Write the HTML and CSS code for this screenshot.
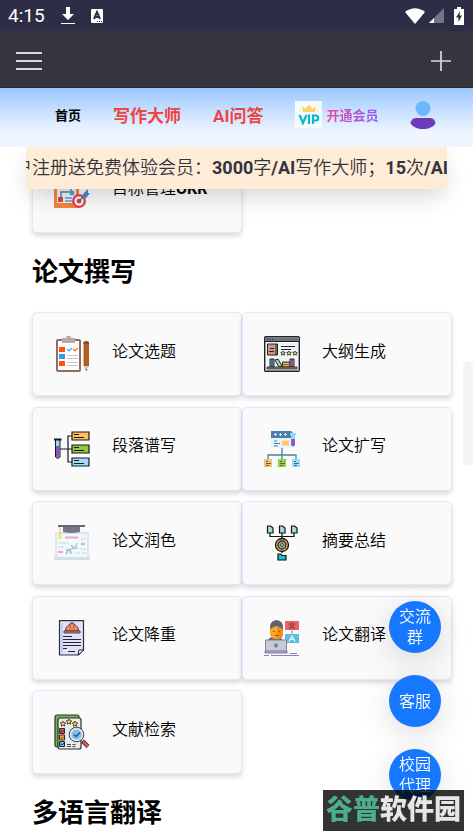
FILE: index.html
```html
<!DOCTYPE html>
<html lang="zh-CN">
<head>
<meta charset="utf-8">
<meta name="viewport" content="width=device-width, initial-scale=1">
<title>写作大师</title>
<link rel="stylesheet" href="styles.css">
</head>
<body>
<div class="status">
  <span class="time">4:15</span>
  <svg class="st-download" width="14" height="18" viewBox="0 0 14 18"><path fill="#fff" d="M5 0h4v7h4L7 13 1 7h4zM0 16h14v1H0z"/></svg>
  <svg class="st-keyboard" width="12" height="14" viewBox="0 0 12 14"><rect width="12" height="14" rx="1" fill="#fff"/><path d="M3 10 6 3l3 7M4 8h4" fill="none" stroke="#2d2e45" stroke-width="2"/><path d="M6 12.500h1m1 0h1m1 0h1" stroke="#2d2e45"/></svg>
  <span class="spacer"></span>
  <svg class="st-wifi" width="20" height="16" viewBox="0 0 20 16"><path fill="#fff" d="M0 4Q10-3.500 20 4L10 16z"/></svg>
  <svg class="st-signal" width="15" height="15" viewBox="0 0 15 15"><path fill="#74758a" d="M15 0v15H0z"/><path fill="#fff" d="M5 10v5H0z"/></svg>
  <svg width="10" height="18" viewBox="0 0 10 18"><path fill="#fff" d="M3 0h4v2h3v16H0V2h3z"/><path fill="#2d2e45" d="M6 4 2 10.500h2.500V15L8 8.500H5.500z"/></svg>
</div>
<div class="toolbar">
  <button class="icon-btn" type="button" aria-label="菜单"><svg width="26" height="20" viewBox="0 0 26 20"><path d="M0 2h26M0 10h26M0 18h26" stroke="#d8d8e4" stroke-width="2"/></svg></button>
  <button class="icon-btn" type="button" aria-label="新建"><svg width="22" height="22" viewBox="0 0 22 22"><path d="M11 1v20M1 11h20" stroke="#d8d8e4" stroke-width="1.700"/></svg></button>
</div>
<nav class="nav">
  <a class="home" href="#">首页</a>
  <a class="hot" href="#">写作大师</a>
  <a class="hot" href="#">AI问答</a>
  <a class="vip" href="#">
    <svg width="27" height="27" viewBox="0 0 27 27"><rect width="27" height="27" fill="#f7fafc"/><path fill="#ffd166" d="M7 5l3.500 3L14 3.500 17.500 8 21 5l-1 6H8z"/><path d="M5 8l1 3M23 8l-1 3" stroke="#ffe3a3"/><path d="M4.500 14 8 22l3.500-8M14 13.500V23M18 23v-8.500h3a2.200 2.500 0 0 1 0 5h-3" fill="none" stroke="#08b8d1" stroke-width="2.200"/></svg>
    <span>开通会员</span>
  </a>
  <a class="avatar" href="#" aria-label="我的"><svg width="26" height="28" viewBox="0 0 26 28"><circle cx="13" cy="7.500" r="7.500" fill="#6bb8ff"/><path fill="#6c3cb8" d="M6 17h14c3 0 5 2 5.500 5-2 4-7 6-12.500 6S2.500 26 .5 22C1 19 3 17 6 17z"/></svg></a>
</nav>
<main class="page">
  <div class="notice"><p>户注册送免费体验会员：<b>3000</b>字<b>/AI</b>写作大师；<b>15</b>次<b>/AI</b></p></div>
  <div class="grid">
    <a class="card" href="#">
      <svg viewBox="0 0 36 36"><path fill="#f5853a" d="M0 1h25v34H0z"/><path fill="#edf3f8" d="M3 1h19v29H3z"/><path d="M7 13h10v7M7 27v-8h10" fill="none" stroke="#4b83bd" stroke-width="1.500"/><path fill="#e84444" d="M4 10h6v6H4zM4 24h5v5H4z"/><circle cx="18" cy="20" r="2.500" fill="#5aa1de"/><path d="M11 25h7M11 28h7" stroke="#5aa1de" stroke-width="1.500"/><circle cx="25" cy="28" r="7" fill="#e84850"/><circle cx="25" cy="28" r="4.500" fill="#fff"/><circle cx="25" cy="28" r="2.500" fill="#e84850"/><path d="m25 28 7-7" stroke="#3474b4" stroke-width="1.500"/><path fill="#438bca" d="m29 21 5-5v4h2l-4 5h-3z"/></svg>
      <span>目标管理<b>OKR</b></span>
    </a>
  </div>
  <h2>论文撰写</h2>
  <div class="grid chapters">
    <a class="card" href="#">
      <svg viewBox="0 0 36 36"><rect x="3" y="4" width="23" height="31" rx="1" fill="#fff" stroke="#8d6e63" stroke-width="2"/><path fill="#bcaaa4" d="M8 2h4a2.500 2.500 0 0 1 5 0h4v5H8z"/><path fill="#ff5205" d="M5 11h6v5H5zM5 25h6v5H5z"/><path fill="#2d9cf0" d="M5 18h6v5H5z"/><path d="m13 13 2 2 3-3" fill="none" stroke="#42a5f5" stroke-width="1.200"/><path d="m19 13 2 2 3-3" fill="none" stroke="#ff6d2d" stroke-width="1.200"/><path d="M13 19.500h11M13 22.500h11M13 26.500h11M13 29.500h11" stroke="#c8c8c8"/><path fill="#b65d25" d="M29.500 6h5.500v24h-5.500z"/><path fill="#7b4c36" d="M29.500 8V6q2.700-2 5.500 0v2z"/><path fill="#ccc" d="M29.500 30H35l-2.700 5z"/><path fill="#444" d="m31.300 33 1 2 1-2z"/></svg>
      <span>论文选题</span>
    </a>
    <a class="card" href="#">
      <svg viewBox="0 0 36 36"><rect x=".7" y=".7" width="34.600" height="34.600" rx="1" fill="#edf5f5" stroke="#20242a" stroke-width="1.400"/><path fill="#77717f" d="M1.400 1.400h33.200V5H1.400z"/><path d="M1 5.500h34" stroke="#20242a"/><path d="M3 3.200h1m1.500 0h1m1.500 0h1" stroke="#222"/><path fill="#cb9888" stroke="#20242a" d="M3.500 8h10v11h-10z"/><path d="M12 8v11M6 12.500h4M5 15.500h5M17 10.500h14M17 13.500h10" stroke="#20242a"/><path fill="#f0d070" stroke="#20242a" stroke-width=".8" d="m19 15 .8 1.300 1.500.2-1.100 1.100.3 1.500-1.500-.6-1.500.6.3-1.500-1.100-1.100 1.500-.2zm6 0 .8 1.300 1.500.2-1.100 1.100.3 1.500-1.500-.6-1.500.6.3-1.500-1.100-1.100 1.500-.2zm6 0 .8 1.300 1.500.2-1.100 1.100.3 1.500-1.500-.6-1.500.6.3-1.500-1.100-1.100 1.500-.2z"/><path fill="#65b8e8" stroke="#20242a" d="M6 23h4v8H6z"/><path d="M8 23v8" stroke="#20242a"/><path fill="#9fdc91" stroke="#20242a" d="m11 24 3-1 4 7-3 1z"/><path fill="#dfb864" stroke="#20242a" d="M18.500 26H26v5h-7.500z"/><path d="M18.500 28.500H26" stroke="#8a682f"/><path fill="#f28bd0" stroke="#20242a" d="M26 23h4v8h-4z"/><path d="M28 23v8" stroke="#20242a"/><path fill="#bb7769" stroke="#20242a" stroke-width=".8" d="M3 31h30v2H3z"/></svg>
      <span>大纲生成</span>
    </a>
    <a class="card" href="#">
      <svg viewBox="0 0 36 36"><path d="M5 18h13M18 5h-4v26h4" fill="none" stroke="#15181c" stroke-width="1.200"/><path fill="#91d9f0" stroke="#15181c" d="M1.500 8.500h4.500V26q-2.200 3-4.500 0z"/><path fill="#8950b8" d="M2 15h3.500v10.500q-1.700 2-3.500 0z"/><path d="M0 8.500h7.500" stroke="#15181c" stroke-width="2"/><g stroke="#15181c" stroke-width="1.200"><path fill="#ffc157" d="M18 1h17v8H18z"/><path fill="#94c83d" d="M18 14h17v8H18z"/><path fill="#9ddcfa" d="M18 27h17v8H18z"/></g><path d="M20 3.500h5M20 6.500h10M20 16.500h5M20 19.500h10M20 29.500h5M20 32.500h10" stroke="#15181c"/></svg>
      <span>段落谱写</span>
    </a>
    <a class="card" href="#">
      <svg viewBox="0 0 36 36"><path fill="#e6f5fb" d="M7 6h20v11H7z"/><path fill="#4c7ea8" d="M7 0h20l2 2v5H7z"/><path d="M10 3.500h3m2 0h3m2 0h3M11.500 2v3m5-3v3m5-3v3" stroke="#cbeeff"/><path fill="#ffc95c" d="M18 9.500h7v5h-7z"/><path d="M10 10h3M10 12.500h6M10 15h4" stroke="#4c7ea8" stroke-width="1.200"/><path fill="#8edafb" d="M26 2h6v2h-1v5h-4V4h-1z"/><path fill="#965abf" d="M27 8h4v6q-2 3-4 0z"/><path d="M18 17v11M4 28v-4h28v4" fill="none" stroke="#4c7ea8" stroke-width="1.300"/><path fill="#ffc157" d="M0 28h8v8H0z"/><path fill="#9bcf34" d="M14 28h8v8h-8z"/><path fill="#9cddfa" d="M28 28h8v8h-8z"/><path d="M2 30.500h2M2 32.500h5M2 34.500h3M16 30.500h2M16 32.500h5M16 34.500h3M30 30.500h2M30 32.500h5M30 34.500h3" stroke="#376d91"/></svg>
      <span>论文扩写</span>
    </a>
    <a class="card" href="#">
      <svg viewBox="0 0 36 36"><path fill="#dbe7ef" d="M1 7h34v27H1z"/><path fill="#f2f8fa" d="M3 9h30v23H3z"/><path fill="#d3e0ea" d="M0 32h36v3H0z"/><path d="M4 18h10M4 22h6M27 14h5M26 24h6M21 28h5m2 0h4" stroke="#bde6b9"/><path d="M11 12.500h13M27 19h4M4 27h5" stroke="#f69ae2" stroke-width="2"/><path d="M12 29.500q1-5 5.500-5.500t5.500-6" fill="none" stroke="#7ec8f1" stroke-width="1.300"/><path d="M12 25q5-1 5.500 4m0-9q1 4 6 3" fill="none" stroke="#7ec8f1" stroke-width="1.300"/><path d="m14 26 2 2m3-7 2 2m-4 0 1 2" stroke="#ffd978" stroke-width="1.300"/><path fill="#67687a" d="M4 0h27v2H4z"/><path fill="#777789" d="M9 2h17v5q-9 2-17 0z"/><path d="M6 2v9" stroke="#f2cb64" stroke-width="1.200"/><path fill="#ffdc73" d="M4.500 10h3v4h-3z"/></svg>
      <span>论文润色</span>
    </a>
    <a class="card" href="#">
      <svg viewBox="0 0 36 36"><path d="M6 8v3.500h24V8M18 8v20" fill="none" stroke="#101417" stroke-width="1.200"/><path fill="#a8d8e0" stroke="#101417" stroke-width="1.200" d="M3.500 1h3l2.500 2v5H3.500zm12 0h3l2.500 2v5h-5.500zm12 0h3l2.500 2v5h-5.500z"/><circle cx="18" cy="20" r="6.500" fill="#f7b733" stroke="#101417" stroke-width="1.300"/><circle cx="18" cy="20" r="4" fill="#8ca9bd" stroke="#222b35" stroke-width="1.300"/><circle cx="18" cy="20" r="1.500" fill="#f5c760" stroke="#222b35" stroke-width=".8"/><path fill="#21bfd2" stroke="#101417" stroke-width="1.200" d="M14 29h3l1 1.500h4V35h-8z"/></svg>
      <span>摘要总结</span>
    </a>
    <a class="card" href="#">
      <svg viewBox="0 0 36 36"><path fill="#dfe2fc" stroke="#2d3038" stroke-width="1.200" d="M5.500.7h24v28.800l-5 5.500h-19z"/><path d="M8 33V3" stroke="#c5cced" stroke-width="2"/><path fill="#f58b68" stroke="#26252a" stroke-width=".8" d="M11.500 11q0-5 4.500-6.500L16.500 3h3l.5 1.500q4.500 1.500 4.500 6.500z"/><path fill="#f58b68" stroke="#26252a" stroke-width=".8" d="M10 11h16v2H10z"/><path d="M16.500 5v4m3-4v4" stroke="#a9553f" stroke-width=".8"/><path d="M9 16.500h9M9 19.500h18M9 22.500h18M9 25.500h18M9 28.500h4M14 31.500h7" stroke="#25282f"/><path fill="#fff" stroke="#25282f" d="m24 35 1-5h5z"/></svg>
      <span>论文降重</span>
    </a>
    <a class="card" href="#">
      <svg viewBox="0 0 36 36"><path fill="#5c5794" d="M4 20q3-4 8-3 6 0 7 4H4z"/><path fill="#fba61e" d="M6 7h13v6q0 6-6.500 6T6 13z"/><path fill="#f08d16" d="M13 7h6v6q0 6-6 6z"/><path d="M9 11.500h1.500m4 0H16M11 15.500h3.500" stroke="#8c4a30"/><path fill="#5f626d" d="M6 9q-1-8 6.500-9Q20 1 19 9q-4-3-7-2.500Q9 6.500 6 9z"/><path fill="#ec626c" d="M21 1h14v9H21z"/><path fill="#5fbce6" d="M21 14h14v9H21z"/><path d="M24.500 4h7M28 2v2m-2 1 5 4m-1-4-5 4" stroke="#8a4a35" stroke-width="1.200"/><path d="m25 21.500 3-5.500 3 5.500m-5-2h4" fill="none" stroke="#e8f4fb" stroke-width="1.200"/><path d="M28 10v4" stroke="#8a83b8"/><path fill="#c7cbd0" stroke="#8580a5" d="M1.500 20h21v12h-21z"/><path fill="#b9bdc9" stroke="#7772a6" d="M1 31h22v2H1z"/><circle cx="12" cy="25.500" r="1.500" fill="#3e9de1" stroke="#5679a8"/><path d="M0 35.500h5m2 0h28M26 33.500h7" stroke="#8a83b8"/></svg>
      <span>论文翻译</span>
    </a>
    <a class="card" href="#">
      <svg viewBox="0 0 36 36"><rect x="1" y="1" width="24" height="32" rx="2" fill="#70b548" stroke="#2a342c" stroke-width="1.200"/><rect x="4" y="4" width="23" height="31" rx="2" fill="#e8ebed" stroke="#2a2c30" stroke-width="1.200"/><path fill="#ffc43e" stroke="#30291e" stroke-width=".8" d="m9 7 .9 1.700 1.900.3-1.400 1.300.3 1.900L9 11.300l-1.700.9.3-1.900L6.200 9l1.900-.3zm6-2 .9 1.700 1.900.3-1.400 1.300.3 1.900-1.700-.9-1.700.9.3-1.900L12.200 7l1.900-.3zm6 2 .9 1.700 1.900.3-1.400 1.300.3 1.900-1.700-.9-1.700.9.3-1.900L18.200 9l1.900-.3z"/><g stroke="#27282c"><path fill="#e84757" d="M5.500 14.500h5v5h-5z"/><path fill="#ffb42c" d="M5.500 21h5v5h-5z"/><path fill="#67b7e7" d="M5.500 27.500h5v5h-5z"/></g><path d="m6.500 17 1.500 1 2-2m-3.500 7.500 1.500 1 2-2m-3.500 7.500 1.500 1 2-2M13 30.500h4m1.500 0h3M13 32.500h4m1.500 0h3" fill="none" stroke="#27282c" stroke-width=".8"/><circle cx="22.500" cy="20.500" r="6" fill="#7ebdf0" stroke="#e1e5ea" stroke-width="2"/><circle cx="22.500" cy="20.500" r="7.300" fill="none" stroke="#3b4047"/><path d="m20 20.500 2 2 4-4" fill="none" stroke="#264d84" stroke-width="1.300"/><path d="m28.500 27 5.500 5.500" stroke="#30292c" stroke-width="4"/><path d="m29 27.500 5 5" stroke="#ee4d58" stroke-width="2.500"/></svg>
      <span>文献检索</span>
    </a>
  </div>
  <h2>多语言翻译</h2>
</main>
<span class="thumb"></span>
<div class="bubbles">
  <button type="button">交流群</button>
  <button type="button">客服</button>
  <button type="button">校园代理</button>
</div>
<div class="watermark"><span>谷普</span>软件园</div>
</body>
</html>
```
FILE: styles.css
```css
* { box-sizing: border-box; }

body {
  margin: 0;
  height: 100vh;
  overflow: hidden;
  display: flex;
  flex-direction: column;
  background: #fff;
  color: #000;
  font-family: Roboto, "Noto Sans CJK SC", sans-serif;
  font-size: 16px;
  font-weight: 350;
}

a { color: inherit; text-decoration: none; }
b { font-weight: 700; }
button { border: 0; font: inherit; cursor: pointer; }
svg { display: block; flex: none; }

.status {
  display: flex;
  align-items: center;
  flex: none;
  height: 31px;
  padding: 0 9px 0 8px;
  background: #2d2e45;
  color: #fff;
}
.time { font-size: 19px; font-weight: 400; line-height: 32px; }
.st-download { margin-left: 16px; }
.st-keyboard { margin-left: 16px; }
.spacer { flex: 1; }
.st-wifi { margin-right: 4px; }
.st-signal { margin-right: 10px; }

.toolbar {
  display: flex;
  justify-content: space-between;
  align-items: center;
  flex: none;
  height: 57px;
  padding: 4px 21px 0 16px;
  background: #36353f;
  border-bottom: 1px solid #292a35;
}
.icon-btn { padding: 0; background: none; }

.nav {
  display: flex;
  align-items: center;
  gap: 32px;
  flex: none;
  height: 59px;
  padding: 0 40px 6px 55px;
  background: linear-gradient(#9cc8ff, #eef5ff 75%);
  font-weight: 700;
  white-space: nowrap;
}
.home { font-size: 13px; }
.hot { font-size: 17px; color: #ef4444; }
.vip { display: flex; align-items: center; gap: 4px; font-size: 13px; }
.vip span {
  background: linear-gradient(90deg, #ec4899, #8b5cf6);
  -webkit-background-clip: text;
  background-clip: text;
  color: transparent;
}

.page {
  position: relative;
  flex: 1;
  min-height: 0;
  overflow: hidden;
  padding: 2px 21px 0 32px;
}

.notice {
  position: absolute;
  z-index: 1;
  top: 0;
  left: 26px;
  right: 26px;
  background: #ffecd6;
  box-shadow: 0 10px 24px -4px rgba(0, 0, 0, .18);
}
.notice p {
  margin: 0;
  overflow: hidden;
  white-space: nowrap;
  text-indent: -12px;
  font-size: 18px;
  line-height: 42px;
  color: #33343e;
}

.grid {
  display: grid;
  grid-template-columns: 1fr 1fr;
  grid-auto-rows: 84px;
  align-content: space-between;
}
.chapters { min-height: 462px; }

.card {
  display: flex;
  align-items: center;
  gap: 22px;
  padding: 0 21px;
  background: #fafafa;
  border: 1px solid #e0e7ff;
  border-radius: 5px;
  box-shadow: 0 3px 5px rgba(0, 0, 0, .15);
}
.card svg { width: 36px; height: 36px; }
.card span { padding-bottom: 5px; line-height: 24px; }

h2 {
  margin: 0;
  padding: 19px 0 20px;
  font-size: 26px;
  line-height: 40px;
}

.thumb {
  position: fixed;
  top: 43%;
  right: 0;
  width: 10px;
  height: 105px;
  border-radius: 5px;
  background: #f4f4f6;
}

.bubbles {
  position: fixed;
  z-index: 2;
  right: 32px;
  bottom: 39px;
  display: grid;
  gap: 22px;
}
.bubbles button {
  width: 52px;
  height: 52px;
  padding: 0 10px;
  border-radius: 50%;
  background: #1677ff;
  color: #fff;
  font-size: 16px;
  line-height: 21px;
  box-shadow: 0 8px 32px rgba(0, 0, 0, .14);
}

.watermark {
  position: fixed;
  z-index: 3;
  right: 9px;
  bottom: 9px;
  padding: 0 3px;
  background: rgba(0, 0, 0, .8);
  color: #e6e6e6;
  font-size: 27px;
  font-weight: 900;
  line-height: 41px;
}
.watermark span { color: #4caf8c; }
```
